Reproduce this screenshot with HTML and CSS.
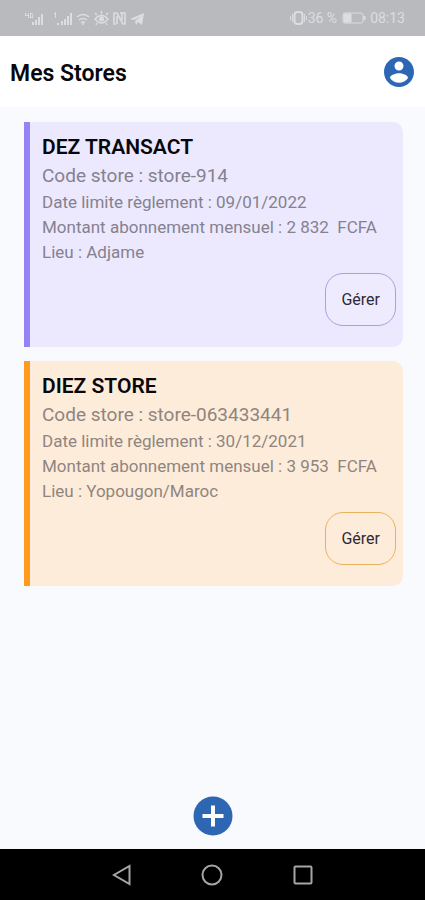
FILE: index.html
```html
<!DOCTYPE html>
<html lang="fr">
<head>
<meta charset="utf-8">
<meta name="viewport" content="width=device-width, initial-scale=1">
<title>Mes Stores</title>
<link rel="stylesheet" href="styles.css">
</head>
<body>
<div class="status">
  <svg class="status-icons" width="124" height="18" viewBox="0 0 124 18" fill="currentColor" aria-hidden="true">
    <path d="M1 4h1v2h2V4h1v5H4V7H1zM6 4h3v1H7v3h1V6h1v3H6zM8 13h2v3H8zM11 11h2v5h-2zM14 8h2v8h-2zM17 5h2v11h-2z"/>
    <path d="M30 4l2-1v6h-1V5h-1zM33 14h2v2h-2zM37 12h2v4h-2zM40 10h2v6h-2zM43 7h2v9h-2zM46 4h2v12h-2z"/>
    <g fill="none" stroke="currentColor" stroke-width="1.4">
      <path d="M53 8q6-5 12 0M55 11q4-3 8 0M57 13.500q2-1 4 0"/>
      <path d="M71 10q6.500-7 13 0q-6.500 8-13 0zM77.500 5V2M73 6l-2-2M82 6l2-2M73 14l-1 2M82 14l1 2"/>
    </g>
    <circle cx="59" cy="15" r="1"/><circle cx="77.500" cy="10" r="2.500"/>
    <g fill="none" stroke="currentColor" stroke-width="1.6"><path d="M92 15h-2V4h3l6 11M96 4h5v11h-2M93 7v8M98 4v7"/></g>
    <path d="M106 10l14-6-2 12-4-3-2 3-1-4 6-5-7 4z"/>
  </svg>
  <div class="status-right">
    <svg width="17" height="16" viewBox="0 0 17 16" fill="none" stroke="currentColor" aria-hidden="true"><rect x="4.500" y="2" width="8" height="12" rx="3" stroke-width="2"/><path d="M2.500 4v8M14.500 4v8M.5 6v4M16.500 6v4"/></svg>
    <span class="percent">36 %</span>
    <svg class="battery" width="24" height="12" viewBox="0 0 24 12" fill="none" stroke="currentColor" aria-hidden="true"><rect x="1" y="1" width="20" height="10" rx="2"/><path d="M2 2h7v8H2z" fill="currentColor"/><path d="M22.500 4v4" stroke-width="2"/></svg>
    <span>08:13</span>
  </div>
</div>
<header class="header">
  <h1>Mes Stores</h1>
  <button class="icon-button" aria-label="Profil">
    <svg width="36" height="36" viewBox="0 0 24 24" fill="currentColor" aria-hidden="true"><path d="M12 2C6.480 2 2 6.480 2 12s4.480 10 10 10 10-4.480 10-10S17.520 2 12 2zm0 3c1.660 0 3 1.340 3 3s-1.340 3-3 3-3-1.340-3-3 1.340-3 3-3zm0 14.200c-2.500 0-4.710-1.280-6-3.220.030-1.990 4-3.080 6-3.080 1.990 0 5.970 1.090 6 3.080-1.290 1.940-3.500 3.220-6 3.220z"/></svg>
  </button>
</header>
<main class="stores">
  <article class="card card-violet">
    <h2>DEZ TRANSACT</h2>
    <p class="code">Code store : store-914</p>
    <p>Date limite règlement : 09/01/2022</p>
    <p>Montant abonnement mensuel : 2 832&nbsp; FCFA</p>
    <p>Lieu : Adjame</p>
    <button class="manage">Gérer</button>
  </article>
  <article class="card card-orange">
    <h2>DIEZ STORE</h2>
    <p class="code">Code store : store-063433441</p>
    <p>Date limite règlement : 30/12/2021</p>
    <p>Montant abonnement mensuel : 3 953&nbsp; FCFA</p>
    <p>Lieu : Yopougon/Maroc</p>
    <button class="manage">Gérer</button>
  </article>
</main>
<div class="actions">
  <button class="icon-button" aria-label="Ajouter">
    <svg width="40" height="40" viewBox="0 0 40 40" aria-hidden="true"><circle cx="20" cy="20" r="19.500" fill="currentColor"/><path d="M20 9.500v21M9.500 20h21" stroke="#fff" stroke-width="4"/></svg>
  </button>
</div>
<nav class="system-nav">
  <button aria-label="Retour"><svg width="22" height="22" viewBox="0 0 22 22"><path d="M18.500 2v18L3 11z"/></svg></button>
  <button aria-label="Accueil"><svg width="22" height="22" viewBox="0 0 22 22"><circle cx="11" cy="11" r="9.500"/></svg></button>
  <button aria-label="Applications récentes"><svg width="22" height="22" viewBox="0 0 22 22"><rect x="2.500" y="2.500" width="17" height="17" rx="1"/></svg></button>
</nav>
</body>
</html>
```
FILE: styles.css
```css
* { box-sizing: border-box; }
body {
  margin: 0;
  min-height: 100vh;
  display: flex;
  flex-direction: column;
  background: #f8fafe;
  font-family: Roboto, sans-serif;
  color: #08080c;
}
h1, h2, p { margin: 0; }
button { font-family: inherit; border: 0; padding: 0; background: none; }
svg { display: block; }
.status {
  height: 36px;
  padding: 0 20px 0 24px;
  display: flex;
  align-items: center;
  justify-content: space-between;
  background: #b9babe;
  color: #dcdde0;
  font-size: 14px;
}
.status-right { display: flex; align-items: center; gap: 1px; }
.percent { margin-right: 4px; }
.battery { margin-right: 3px; }
.header {
  height: 71px;
  padding: 0 8px 0 10px;
  display: flex;
  align-items: center;
  justify-content: space-between;
  background: #fff;
}
h1 { padding-top: 4px; font-size: 23px; line-height: 28px; font-weight: 600; }
.icon-button { color: #2d66b3; }
.stores {
  flex: 1;
  padding: 15px 22px 0 24px;
  display: flex;
  flex-direction: column;
  gap: 14px;
}
.card {
  padding: 10px 7px 21px 12px;
  display: flex;
  flex-direction: column;
  border-left: 6px solid;
  border-radius: 0 10px 10px 0;
  font-size: 16px;
  line-height: 25px;
}
.card-violet { background: #ece9fe; border-color: #9384f5; }
.card-orange { background: #feecdb; border-color: #ff9a1f; }
.card h2 { font-size: 21px; line-height: 30px; font-weight: 600; }
.card p { color: #85818f; font-size: 17px; }
.card-orange p { color: #8f857e; }
.card .code { font-size: 19px; line-height: 28px; }
.manage {
  align-self: flex-end;
  margin-top: 8px;
  padding: 0 15px;
  height: 53px;
  border: 1px solid;
  border-radius: 18px;
  font-size: 16px;
  color: #2d2b36;
}
.card-violet .manage { border-color: #aaa0df; background: #eeebfe; }
.card-orange .manage { border-color: #e9b35e; }
.actions { display: flex; justify-content: center; padding-bottom: 13px; }
.system-nav {
  height: 51px;
  padding: 0 77px;
  display: grid;
  grid-template-columns: repeat(3, 1fr);
  align-items: center;
  background: #000;
}
.system-nav button { justify-self: center; }
.system-nav svg { fill: none; stroke: #a5a5a5; stroke-width: 2; }
```
